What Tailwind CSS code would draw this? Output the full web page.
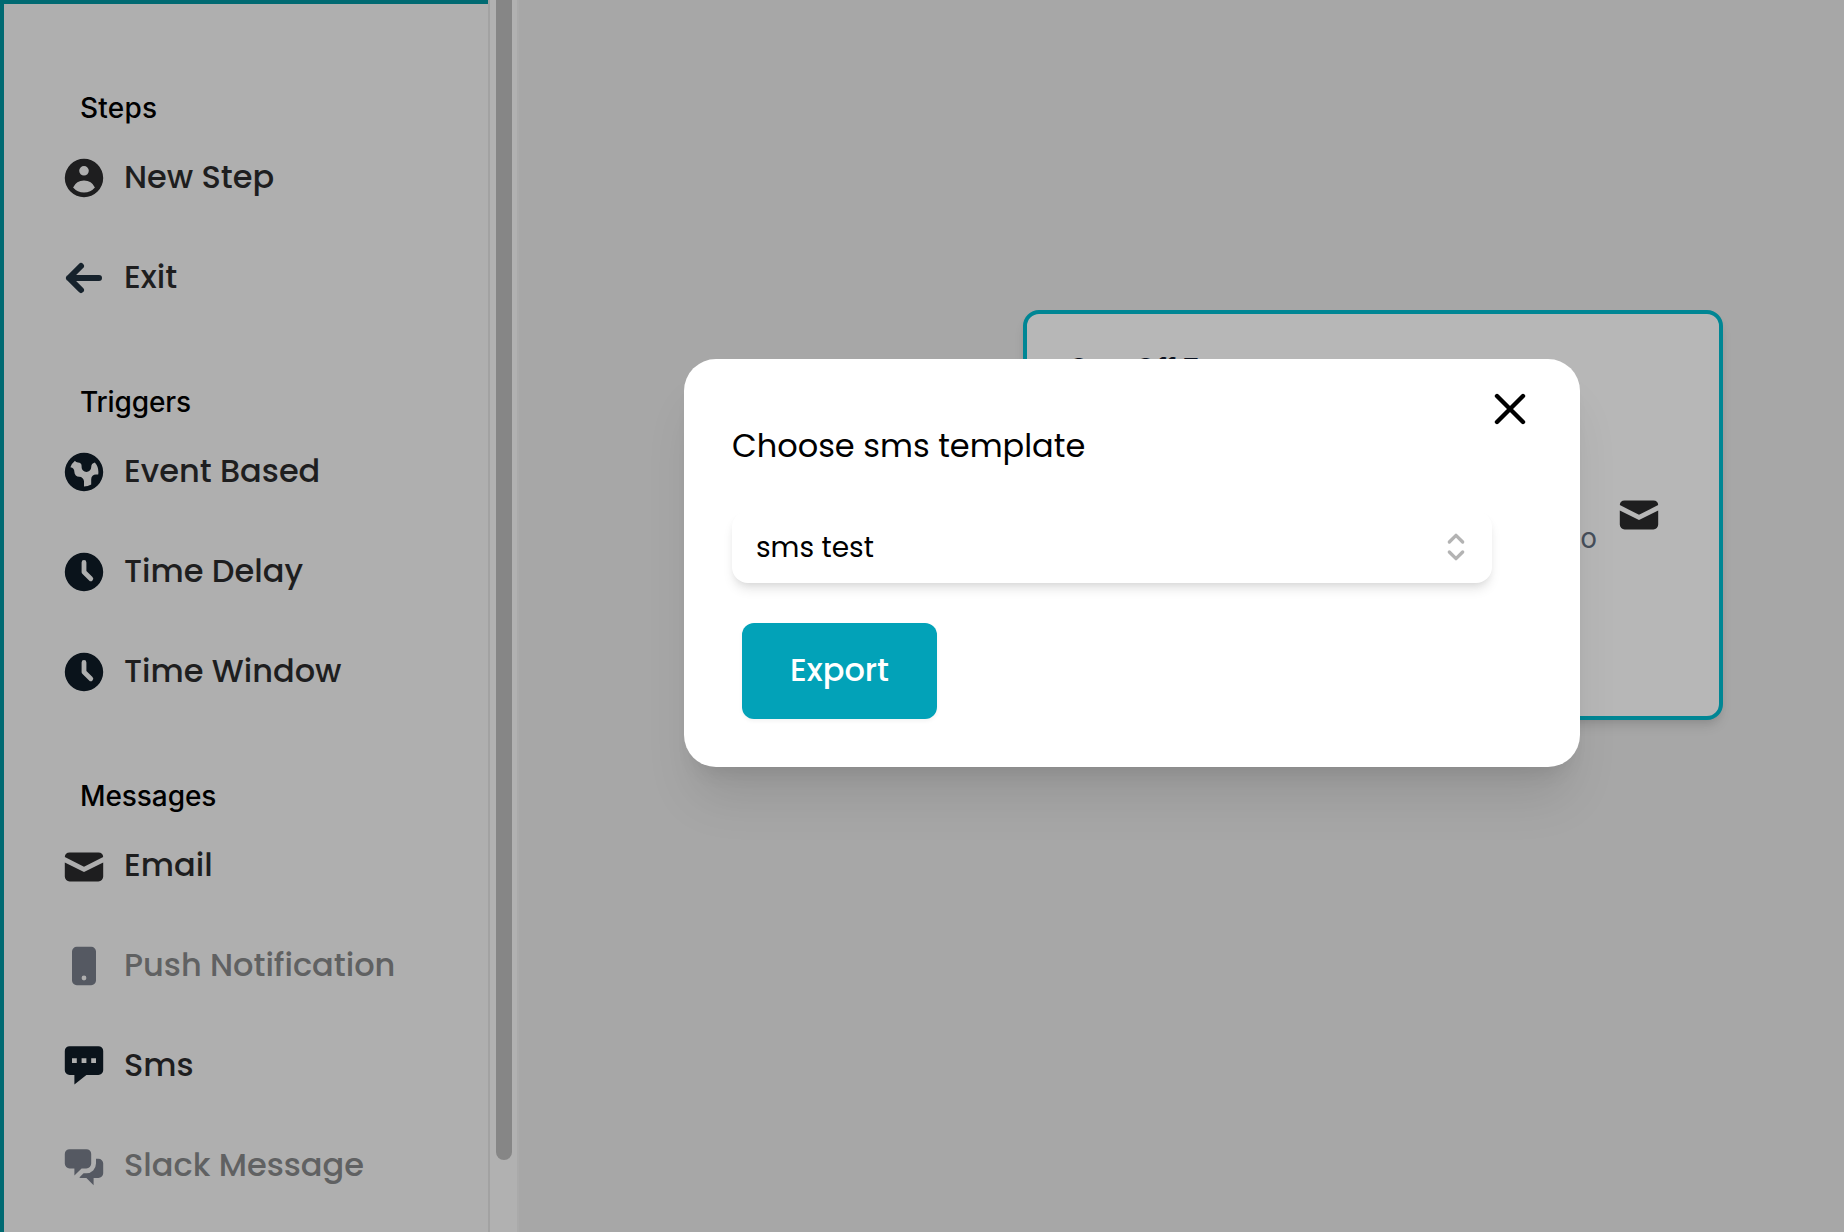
<!DOCTYPE html>
<html lang="en">
<head>
<meta charset="utf-8">
<title>Journey builder</title>
<script src="https://cdn.jsdelivr.net/npm/@tailwindcss/browser@4"></script>
</head>
<body class="flex h-screen overflow-hidden bg-[#a7a7a7] font-[Poppins,Inter,sans-serif] text-[#1e1e1f]">

<!-- Sidebar -->
<aside class="flex h-full w-[488px] shrink-0 flex-col gap-[54px] border-t-4 border-l-4 border-[#006a72] bg-[#afafaf] pt-[84px] pl-14">
  <section>
    <h2 class="h-10 pl-5 font-[Inter,sans-serif] text-[28px] leading-[41px] font-medium tracking-[0.2px] text-black">Steps</h2>
    <div class="flex h-[100px] items-center gap-4">
      <svg class="size-12" viewBox="0 0 20 20" fill="currentColor"><path fill-rule="evenodd" clip-rule="evenodd" d="M18 10a8 8 0 11-16 0 8 8 0 0116 0zm-6-3a2 2 0 11-4 0 2 2 0 014 0zm-2 4a5 5 0 00-4.546 2.916A5.986 5.986 0 0010 16a5.986 5.986 0 004.546-2.084A5 5 0 0010 11z"/></svg>
      <span class="-mt-0.5 text-[32px] leading-12 font-medium">New Step</span>
    </div>
    <div class="flex h-[100px] items-center gap-4">
      <svg class="size-12 text-[#16222c]" viewBox="0 0 48 48" fill="none" stroke="currentColor" stroke-width="6" stroke-linecap="round" stroke-linejoin="round"><path d="M39 24H9M21 12L9 24l12 12"/></svg>
      <span class="-mt-0.5 text-[32px] leading-12 font-medium">Exit</span>
    </div>
  </section>

  <section>
    <h2 class="h-10 pl-5 font-[Inter,sans-serif] text-[28px] leading-[41px] font-medium tracking-[-0.13px] text-black">Triggers</h2>
    <div class="flex h-[100px] items-center gap-4">
      <svg class="size-12 text-[#0a131b]" viewBox="0 0 20 20" fill="currentColor"><path fill-rule="evenodd" clip-rule="evenodd" d="M10 18a8 8 0 100-16 8 8 0 000 16zM4.332 8.027a6.012 6.012 0 011.912-2.706C6.512 5.73 6.974 6 7.5 6A1.5 1.5 0 019 7.5V8a2 2 0 004 0 2 2 0 011.523-1.943A5.977 5.977 0 0116 10c0 .34-.028.675-.083 1H15a2 2 0 00-2 2v2.197A5.973 5.973 0 0110 16v-2a2 2 0 00-2-2 2 2 0 01-2-2 2 2 0 00-1.668-1.973z"/></svg>
      <span class="-mt-0.5 text-[32px] leading-12 font-medium">Event Based</span>
    </div>
    <div class="flex h-[100px] items-center gap-4">
      <svg class="size-12 text-[#0a131b]" viewBox="0 0 20 20" fill="currentColor"><path fill-rule="evenodd" clip-rule="evenodd" d="M10 18a8 8 0 100-16 8 8 0 000 16zm1-12a1 1 0 10-2 0v4a1 1 0 00.293.707l2.828 2.829a1 1 0 101.415-1.415L11 9.586V6z"/></svg>
      <span class="-mt-0.5 text-[32px] leading-12 font-medium">Time Delay</span>
    </div>
    <div class="flex h-[100px] items-center gap-4">
      <svg class="size-12 text-[#0a131b]" viewBox="0 0 20 20" fill="currentColor"><path fill-rule="evenodd" clip-rule="evenodd" d="M10 18a8 8 0 100-16 8 8 0 000 16zm1-12a1 1 0 10-2 0v4a1 1 0 00.293.707l2.828 2.829a1 1 0 101.415-1.415L11 9.586V6z"/></svg>
      <span class="-mt-0.5 text-[32px] leading-12 font-medium">Time Window</span>
    </div>
  </section>

  <section>
    <h2 class="h-10 pl-5 font-[Inter,sans-serif] text-[28px] leading-[41px] font-medium tracking-[-0.08px] text-black">Messages</h2>
    <div class="flex h-[100px] items-center gap-4">
      <svg class="mt-0.5 size-12" viewBox="0 0 20 20" fill="currentColor"><path d="M2.003 5.884L10 9.882l7.997-3.998A2 2 0 0016 4H4a2 2 0 00-1.997 1.884z"/><path d="M18 8.118l-8 4-8-4V14a2 2 0 002 2h12a2 2 0 002-2V8.118z"/></svg>
      <span class="-mt-0.5 text-[32px] leading-12 font-medium">Email</span>
    </div>
    <div class="flex h-[100px] items-center gap-4">
      <svg class="size-12 text-[#555962]" viewBox="0 0 20 20" fill="currentColor"><path fill-rule="evenodd" clip-rule="evenodd" d="M7 2a2 2 0 00-2 2v12a2 2 0 002 2h6a2 2 0 002-2V4a2 2 0 00-2-2H7zm3 14a1 1 0 100-2 1 1 0 000 2z"/></svg>
      <span class="-mt-0.5 text-[32px] leading-12 font-medium text-[#606162]">Push Notification</span>
    </div>
    <div class="flex h-[100px] items-center gap-4">
      <svg class="-mt-1.5 size-12 text-[#0a131b]" viewBox="0 0 20 20" fill="currentColor"><path fill-rule="evenodd" clip-rule="evenodd" d="M18 5v8a2 2 0 01-2 2h-5l-5 4v-4H4a2 2 0 01-2-2V5a2 2 0 012-2h12a2 2 0 012 2zM7 8H5v2h2V8zm2 0h2v2H9V8zm6 0h-2v2h2V8z"/></svg>
      <span class="-mt-0.5 text-[32px] leading-12 font-medium">Sms</span>
    </div>
    <div class="flex h-[100px] items-center gap-4">
      <svg class="size-12 text-[#555962]" viewBox="0 0 20 20" fill="currentColor"><path d="M2 5a2 2 0 012-2h7a2 2 0 012 2v4a2 2 0 01-2 2H9l-3 3v-3H4a2 2 0 01-2-2V5z"/><path d="M15 7v2a4 4 0 01-4 4H9.828l-1.766 1.767c.28.149.599.233.938.233h2l3 3v-3h2a2 2 0 002-2V9a2 2 0 00-2-2h-1z"/></svg>
      <span class="-mt-0.5 text-[32px] leading-12 font-medium text-[#606162]">Slack Message</span>
    </div>
  </section>
</aside>

<!-- Scrollbar -->
<div class="flex h-full w-[31px] shrink-0 border-x-2 border-l-[#a2a2a2] border-r-[#aaaaaa] bg-[#b1b1b1] pl-1.5">
  <div class="h-[1160px] w-4 rounded-b-full bg-[#868686]"></div>
</div>

<!-- Canvas -->
<main class="relative h-full flex-1">
  <div class="absolute top-[310px] left-[504px] h-[410px] w-[700px] rounded-2xl border-4 border-[#008694] bg-[#b7b7b7] shadow-[0_8px_12px_-2px_rgba(0,0,0,0.1),0_4px_8px_-4px_rgba(0,0,0,0.1)]">
    <div class="flex h-full flex-col pt-[35px] pr-14 pl-[41px]">
      <h3 class="font-[Inter,sans-serif] text-[28px] leading-10 font-semibold tracking-[-0.4px] text-[#0b1220]">One-Off Event</h3>
      <div class="mt-[102px] flex items-start justify-end gap-[18px]">
        <p class="mt-[27px] font-[Inter,sans-serif] text-[28px] leading-10 text-[#474f5b]">to</p>
        <svg class="size-12" viewBox="0 0 20 20" fill="currentColor"><path d="M2.003 5.884L10 9.882l7.997-3.998A2 2 0 0016 4H4a2 2 0 00-1.997 1.884z"/><path d="M18 8.118l-8 4-8-4V14a2 2 0 002 2h12a2 2 0 002-2V8.118z"/></svg>
      </div>
    </div>
  </div>
</main>

<!-- Template dialog -->
<div role="dialog" class="absolute top-[359px] left-[684px] flex h-[408px] w-[896px] flex-col rounded-[32px] bg-white px-12 shadow-[0_40px_50px_-10px_rgba(0,0,0,0.1),0_16px_20px_-12px_rgba(0,0,0,0.1)]">
  <button class="absolute top-5 right-[40px] flex size-[60px] items-center justify-center text-black" aria-label="Close">
    <svg class="size-9" viewBox="0 0 36 36" fill="none" stroke="currentColor" stroke-width="4.4" stroke-linecap="round"><path d="M5 5l26 26M31 5L5 31"/></svg>
  </button>
  <h1 class="mt-[63px] text-[32px] leading-12 text-black">Choose sms template</h1>
  <div class="mt-[41px] flex h-[72px] w-[760px] items-center justify-between rounded-2xl bg-white pr-4 pl-6 shadow-[0_8px_12px_-2px_rgba(0,0,0,0.1),0_4px_8px_-4px_rgba(0,0,0,0.1)]">
    <span class="mt-0.5 text-[28px] leading-10 text-black">sms test</span>
    <svg class="size-10 text-[#b3b3b3]" viewBox="0 0 24 24" fill="none" stroke="currentColor" stroke-width="2" stroke-linecap="round" stroke-linejoin="round"><path d="M8 9l4-4 4 4m0 6l-4 4-4-4"/></svg>
  </div>
  <button class="mt-10 ml-2.5 flex h-24 w-[195px] items-center justify-center rounded-xl bg-[#02a2b8] text-[32px] leading-12 font-medium text-white shadow-[0_2px_4px_rgba(0,0,0,0.05)]"><span class="-mt-0.5">Export</span></button>
</div>
</body>
</html>
